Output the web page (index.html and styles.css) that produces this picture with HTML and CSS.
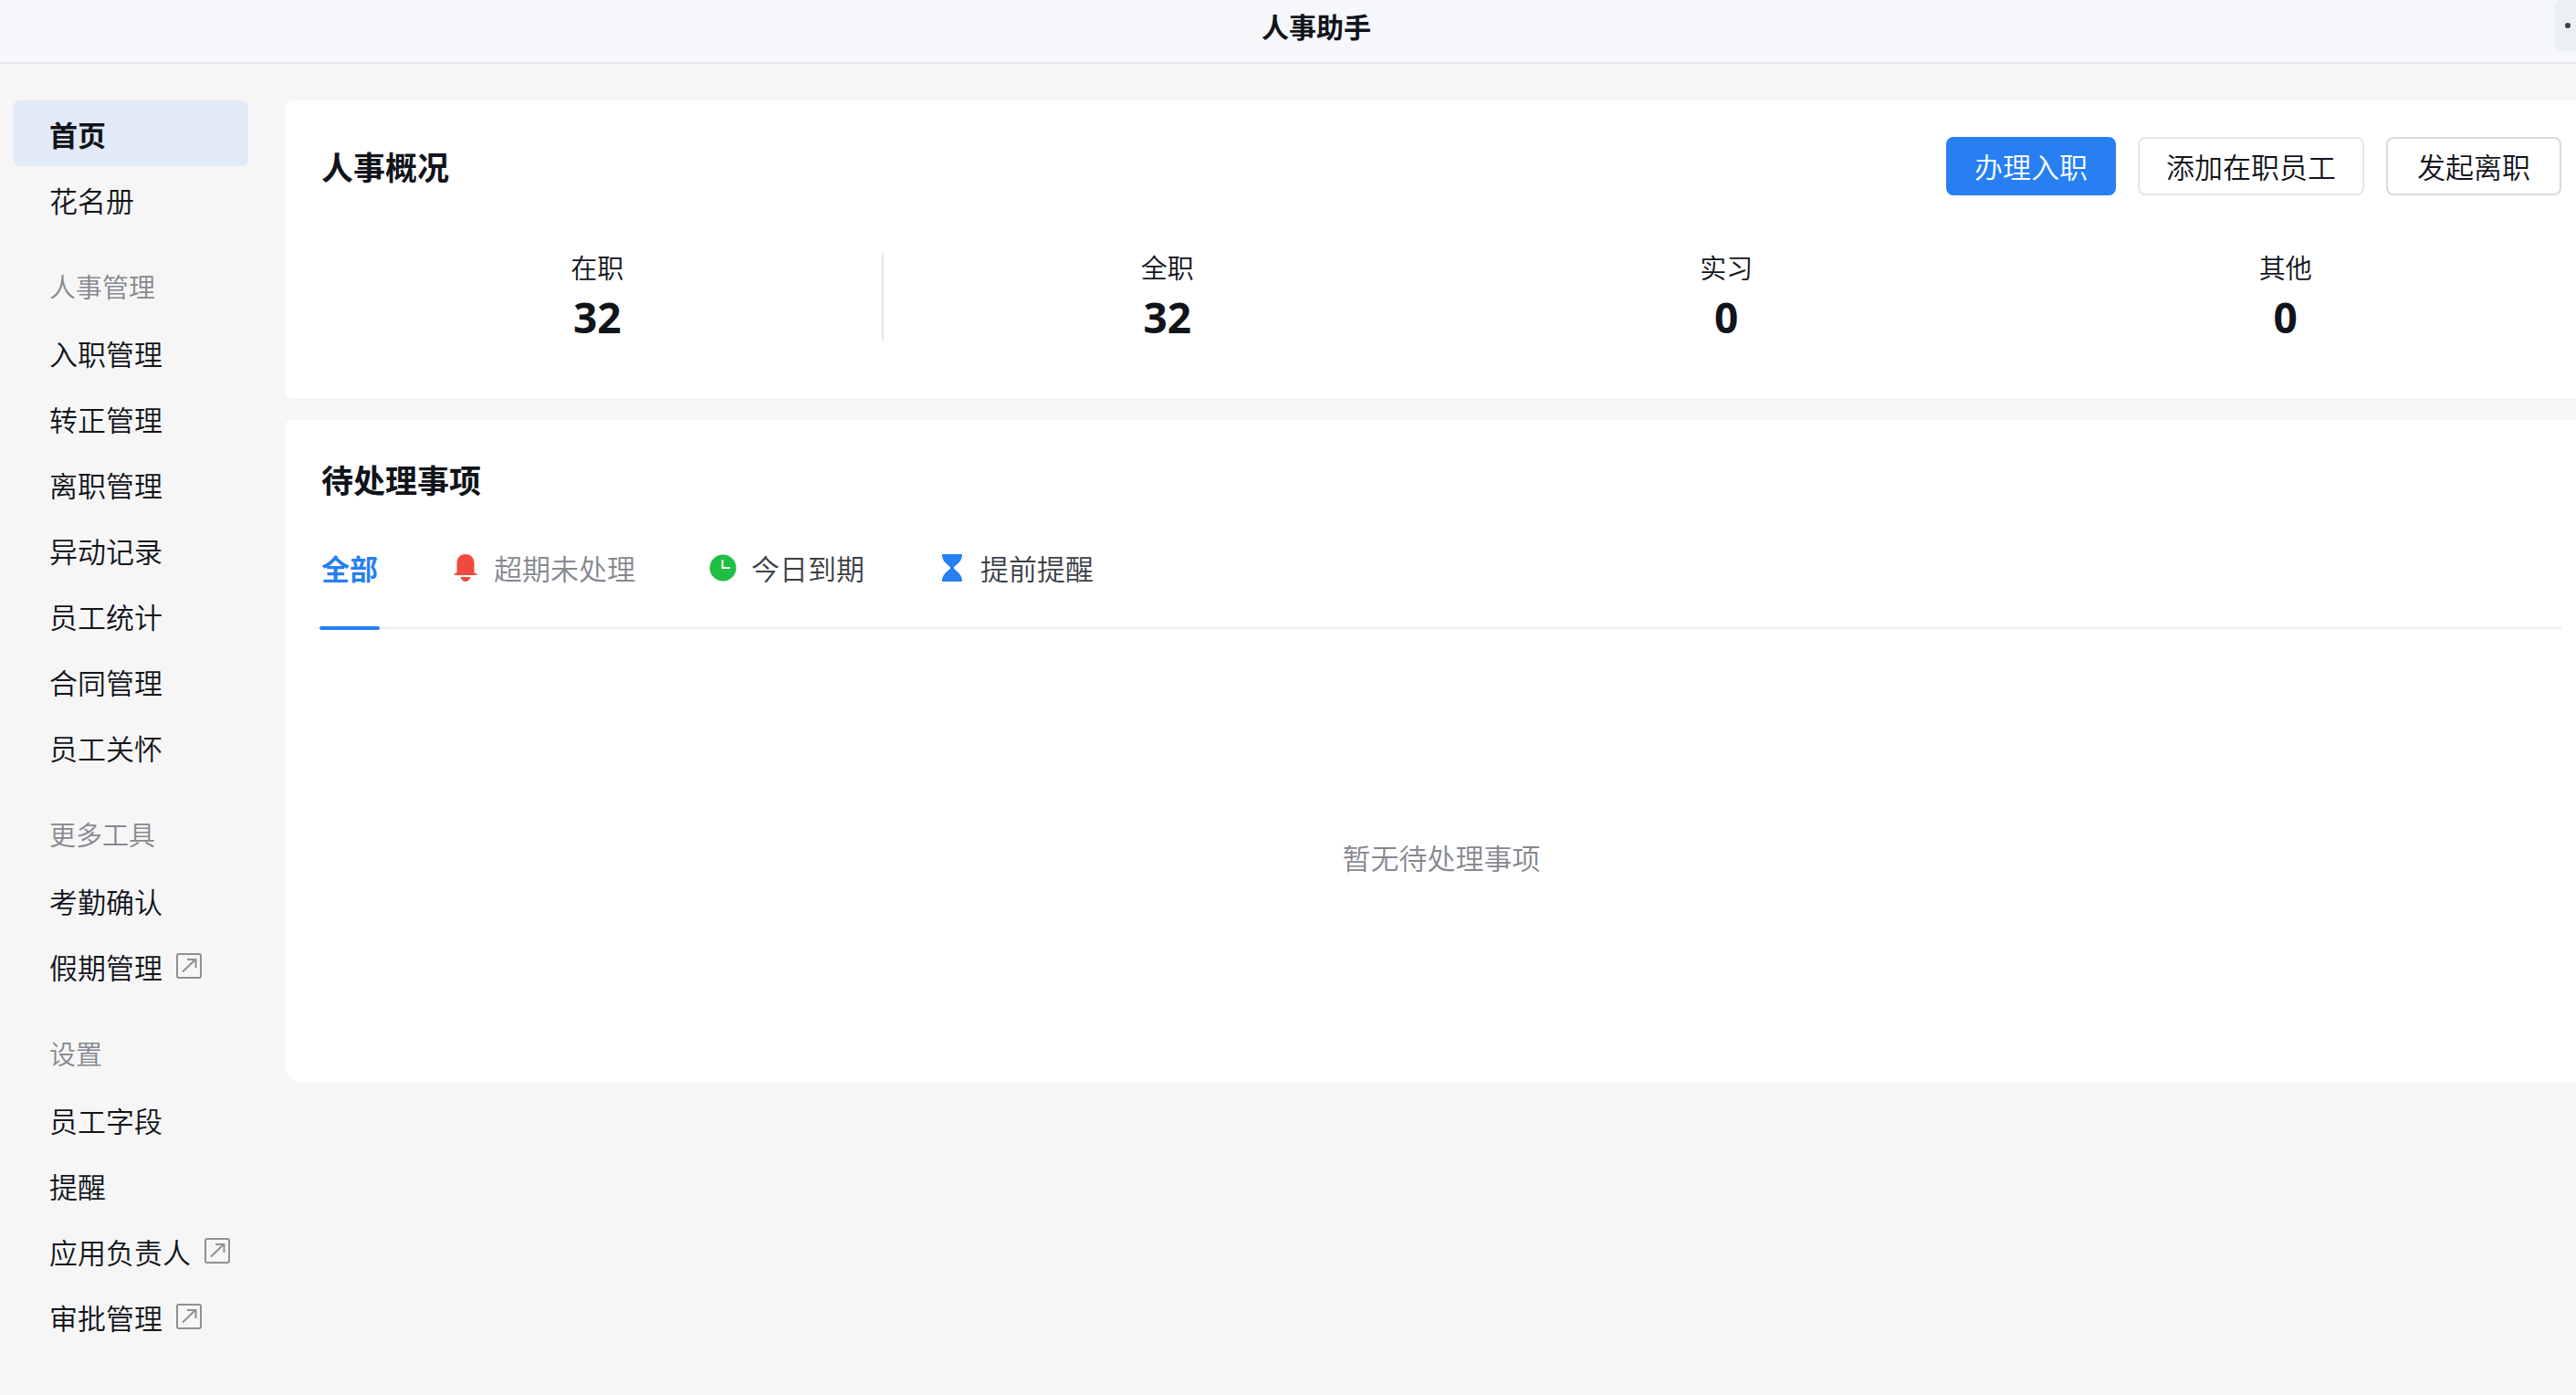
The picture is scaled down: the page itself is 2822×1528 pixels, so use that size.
FILE: index.html
```html
<!DOCTYPE html>
<html lang="zh-CN">
<head>
<meta charset="utf-8">
<meta name="viewport" content="width=device-width, initial-scale=1">
<title>人事助手</title>
<link rel="stylesheet" href="styles.css">
</head>
<body>
<svg class="sprite" aria-hidden="true">
  <symbol id="icon-external" viewBox="0 0 28 28">
    <rect x="1" y="1" width="26" height="26" rx="2" fill="none" stroke="currentColor" stroke-width="2"/>
    <path d="M7 20.500 21 7M12 7h9.500v9" fill="none" stroke="currentColor" stroke-width="2"/>
  </symbol>
</svg>

<header class="topbar">
  <h1 class="topbar-title">人事助手</h1>
  <button class="topbar-more" type="button" aria-label="更多"><span class="dot"></span></button>
</header>

<div class="layout">
  <nav class="sidebar">
    <a class="nav-item nav-item-active" href="#" aria-current="page">首页</a>
    <a class="nav-item" href="#">花名册</a>
    <h2 class="nav-group">人事管理</h2>
    <a class="nav-item" href="#">入职管理</a>
    <a class="nav-item" href="#">转正管理</a>
    <a class="nav-item" href="#">离职管理</a>
    <a class="nav-item" href="#">异动记录</a>
    <a class="nav-item" href="#">员工统计</a>
    <a class="nav-item" href="#">合同管理</a>
    <a class="nav-item" href="#">员工关怀</a>
    <h2 class="nav-group">更多工具</h2>
    <a class="nav-item" href="#">考勤确认</a>
    <a class="nav-item" href="#">假期管理<svg class="nav-icon"><use href="#icon-external"/></svg></a>
    <h2 class="nav-group">设置</h2>
    <a class="nav-item" href="#">员工字段</a>
    <a class="nav-item" href="#">提醒</a>
    <a class="nav-item" href="#">应用负责人<svg class="nav-icon"><use href="#icon-external"/></svg></a>
    <a class="nav-item" href="#">审批管理<svg class="nav-icon"><use href="#icon-external"/></svg></a>
  </nav>

  <main class="content">
    <section class="card overview">
      <div class="card-head">
        <h2 class="card-title">人事概况</h2>
        <div class="actions">
          <button class="btn btn-primary" type="button">办理入职</button>
          <button class="btn" type="button">添加在职员工</button>
          <button class="btn btn-strong" type="button">发起离职</button>
        </div>
      </div>
      <div class="stats">
        <div class="stat"><span class="stat-label">在职</span><strong class="stat-value">32</strong></div>
        <div class="stat-divider"></div>
        <div class="stat"><span class="stat-label">全职</span><strong class="stat-value">32</strong></div>
        <div class="stat"><span class="stat-label">实习</span><strong class="stat-value">0</strong></div>
        <div class="stat"><span class="stat-label">其他</span><strong class="stat-value">0</strong></div>
      </div>
    </section>

    <section class="card pending">
      <h2 class="card-title">待处理事项</h2>
      <div class="tabs" role="tablist">
        <button class="tab tab-active" type="button" role="tab" aria-selected="true">全部</button>
        <button class="tab tab-muted" type="button" role="tab" aria-selected="false">
          <svg class="tab-icon" viewBox="0 0 30 30"><path fill="#f04a3e" d="M15 0C9.500 0 5.500 4 5.500 9.500V20L2.500 22v1h25v-1l-3-2V9.500C24.500 4 20.500 0 15 0zM9.500 25h11c-.8 3-3 5-5.500 5s-4.700-2-5.500-5z"/></svg>
          超期未处理
        </button>
        <button class="tab" type="button" role="tab" aria-selected="false">
          <svg class="tab-icon" viewBox="0 0 30 30"><circle cx="15" cy="15" r="14.500" fill="#1fbf45"/><path d="M14.500 7v8H22" fill="none" stroke="#fff" stroke-width="2" stroke-linecap="round"/></svg>
          今日到期
        </button>
        <button class="tab" type="button" role="tab" aria-selected="false">
          <svg class="tab-icon" viewBox="0 0 30 30"><path fill="#277ff2" d="M4 0h22c0 6-2.500 9-9 14v2c6.500 5 9 8 9 14H4c0-6 2.500-9 9-14v-2C6.500 9 4 6 4 0z"/></svg>
          提前提醒
        </button>
      </div>
      <p class="empty">暂无待处理事项</p>
    </section>
  </main>
</div>
</body>
</html>
```

FILE: styles.css
```css
* {
  box-sizing: border-box;
}

body {
  margin: 0;
  min-height: 100vh;
  background: #f6f6f6;
  color: #11141a;
  font-family: "Noto Sans CJK SC", sans-serif;
  font-size: 31px;
  font-weight: 350;
  line-height: 40px;
  overflow-x: hidden;
}

h1,
h2,
p {
  margin: 0;
}

button {
  font: inherit;
  color: inherit;
  cursor: pointer;
}

.sprite {
  display: none;
}

/* Top bar */
.topbar {
  display: flex;
  align-items: flex-start;
  height: 70px;
  padding-left: 86px;
  background: #f5f7fb;
  border-bottom: 2px solid #e5e7eb;
}

.topbar-title {
  flex: 1;
  font-size: 30px;
  line-height: 56px;
  font-weight: 700;
  text-align: center;
}

.topbar-more {
  display: flex;
  align-items: center;
  width: 24px;
  height: 56px;
  padding: 0 0 0 12px;
  border: 0;
  border-radius: 8px 0 0 8px;
  background: #ecf0f5;
}

.dot {
  width: 6px;
  height: 6px;
  border-radius: 50%;
  background: #3c3f46;
}

/* Layout */
.layout {
  display: flex;
  gap: 40px;
  padding: 40px 0 40px 14px;
}

.sidebar {
  flex: none;
  width: 258px;
}

.nav-item {
  display: flex;
  align-items: center;
  gap: 15px;
  height: 72px;
  padding: 2px 0 0 40px;
  border-radius: 8px;
  color: inherit;
  text-decoration: none;
}

.nav-item-active {
  background: #e2e9f7;
  font-weight: 700;
}

.nav-group {
  padding: 39px 0 17px 40px;
  font-size: 29px;
  font-weight: inherit;
  color: #85888f;
}

.nav-icon {
  width: 28px;
  height: 28px;
  margin-bottom: 2px;
  color: #8f8f94;
}

/* Cards */
.content {
  flex: 1;
  min-width: 0;
  display: flex;
  flex-direction: column;
  gap: 24px;
}

.card {
  background: #fff;
  border-radius: 8px 0 0 8px;
}

.card-title {
  font-size: 35px;
  font-weight: 700;
}

.overview {
  padding: 40px 12px 63px 36px;
}

.card-head {
  display: flex;
  align-items: center;
  justify-content: space-between;
  padding: 0 4px;
}

.actions {
  display: flex;
  gap: 24px;
}

.btn {
  height: 64px;
  padding: 0 29px;
  border: 2px solid #e6e6e6;
  border-radius: 8px;
  background: #fff;
}

.btn-primary {
  border-color: #277ff2;
  background: #277ff2;
  color: #fff;
}

.btn-strong {
  padding: 0 32px;
  border-color: #dadada;
}

.stats {
  display: flex;
  margin-top: 63px;
}

.stat {
  flex: 1;
  display: flex;
  flex-direction: column;
  align-items: center;
  gap: 16px;
  padding-bottom: 2px;
}

.stat-label {
  font-size: 29px;
  line-height: 30px;
}

.stat-value {
  font-family: "Open Sans", sans-serif;
  font-size: 46px;
  line-height: 48px;
  font-weight: 700;
}

.stat-divider {
  width: 2px;
  margin: 0 5px;
  background: #e6e6e6;
}

/* Pending items */
.pending {
  padding: 45px 16px 0 32px;
  border-bottom-left-radius: 20px;
}

.pending .card-title {
  padding-left: 8px;
}

.tabs {
  display: flex;
  gap: 77px;
  margin-top: 40px;
  padding-left: 6px;
  border-bottom: 2px solid #eee;
}

.tab {
  position: relative;
  display: flex;
  align-items: center;
  gap: 16px;
  height: 102px;
  padding: 0 2px 28px;
  border: 0;
  background: none;
  color: #3c3f46;
}

.tab-active {
  color: #277ff2;
  font-weight: 700;
}

.tab-active::after {
  content: "";
  position: absolute;
  left: 0;
  right: 0;
  bottom: -3px;
  height: 4px;
  border-radius: 2px;
  background: #277ff2;
}

.tab-muted {
  color: #85888f;
}

.tab-icon {
  width: 30px;
  height: 30px;
}

.empty {
  padding: 230px 0 227px 8px;
  color: #85888f;
  text-align: center;
}
```
